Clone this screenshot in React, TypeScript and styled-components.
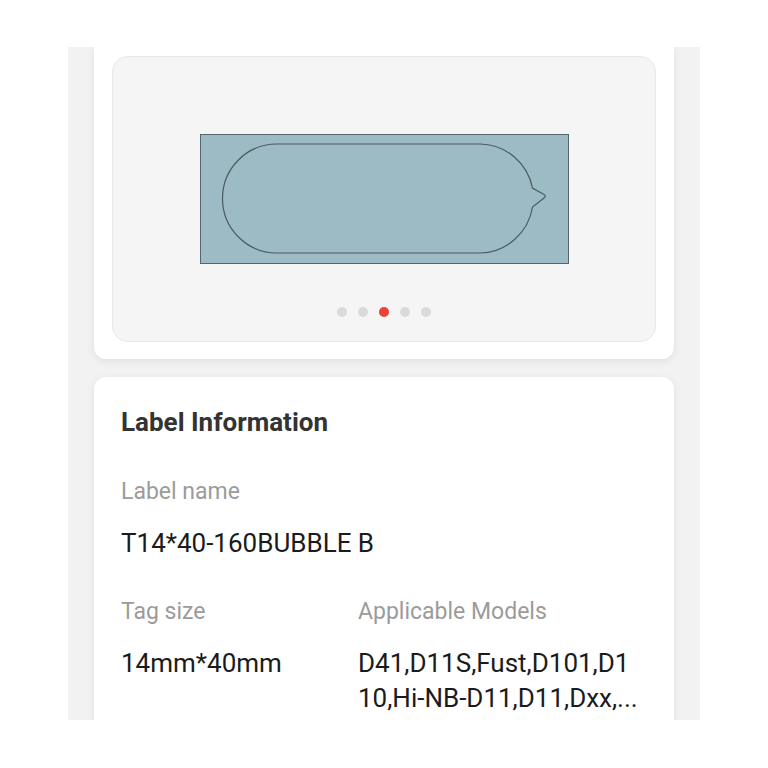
import React from "react";
import styled, { createGlobalStyle } from "styled-components";

const Global = createGlobalStyle`
  html, body { margin: 0; padding: 0; background: #ffffff; }
  body { font-family: Roboto, "Noto Sans", Arial, sans-serif; }
`;

const Page = styled.div`
  width: 768px;
  height: 768px;
  overflow: hidden;
  background: #ffffff;
  padding-top: 47px;
  box-sizing: border-box;
`;

const Panel = styled.div`
  margin-left: 68px;
  width: 632px;
  height: 673px;
  background: #f2f2f2;
  overflow: hidden;
  padding: 0 26px;
  box-sizing: border-box;
  display: flex;
  flex-direction: column;
  gap: 18px;
`;

const Card = styled.section<{ $top?: boolean }>`
  background: #ffffff;
  border-radius: ${(p) => (p.$top ? "0 0 12px 12px" : "12px")};
  box-shadow: 0 2px 8px rgba(0, 0, 0, 0.08);
  flex-shrink: 0;
`;

const PreviewCard = styled(Card)`
  padding: 9px 18px 17px;
`;

const PreviewBox = styled.div`
  height: 286px;
  box-sizing: border-box;
  background: #f5f5f5;
  border: 1px solid #e8e8e8;
  border-radius: 16px;
  display: flex;
  flex-direction: column;
  align-items: center;
  padding-top: 77px;
`;

const LabelSvg = styled.svg`
  display: block;
`;

const Dots = styled.div`
  display: flex;
  gap: 11px;
  margin-top: 43px;
`;

const Dot = styled.span<{ $active?: boolean }>`
  width: 10px;
  height: 10px;
  border-radius: 50%;
  background: ${(p) => (p.$active ? "#ea4335" : "#dadada")};
`;

const InfoCard = styled(Card)`
  padding: 30px 27px 40px;
`;

const Title = styled.h2`
  margin: 0;
  font-size: 26px;
  line-height: 30px;
  font-weight: 700;
  color: #333333;
`;

const FieldLabel = styled.div`
  font-size: 23px;
  line-height: 28px;
  color: #9b9b9b;
`;

const FieldValue = styled.div`
  margin-top: 20px;
  font-size: 26px;
  line-height: 35px;
  color: #1b1b1b;
`;

const Models = styled(FieldValue)`
  width: 282px;
  word-break: break-all;
`;

const Field = styled.div`
  margin-top: 41px;
`;

const Grid = styled.div`
  display: grid;
  grid-template-columns: 237px 1fr;
  margin-top: 37px;
`;

export default function App() {
  return (
    <>
      <Global />
      <Page>
        <Panel>
          <PreviewCard $top>
            <PreviewBox>
              <LabelSvg width="369" height="130" viewBox="0 0 369 130">
                <rect x="0.5" y="0.5" width="368" height="129" fill="#9dbbc4" stroke="#55656b" strokeWidth="1" />
                <path
                  d="M77,10 H280 A54.5,54.5 0 0 1 332.5,54 L344,60.5 Q346.5,62 344,64 L332.5,73 A54.5,54.5 0 0 1 280,119 H77 A54.5,54.5 0 0 1 77,10 Z"
                  fill="none"
                  stroke="#4a5b61"
                  strokeWidth="1.2"
                />
              </LabelSvg>
              <Dots>
                <Dot />
                <Dot />
                <Dot $active />
                <Dot />
                <Dot />
              </Dots>
            </PreviewBox>
          </PreviewCard>
          <InfoCard>
            <Title>Label Information</Title>
            <Field>
              <FieldLabel>Label name</FieldLabel>
              <FieldValue>T14*40-160BUBBLE B</FieldValue>
            </Field>
            <Grid>
              <div>
                <FieldLabel>Tag size</FieldLabel>
                <FieldValue>14mm*40mm</FieldValue>
              </div>
              <div>
                <FieldLabel>Applicable Models</FieldLabel>
                <Models>D41,D11S,Fust,D101,D110,Hi-NB-D11,D11,Dxx,...</Models>
              </div>
            </Grid>
          </InfoCard>
        </Panel>
      </Page>
    </>
  );
}
